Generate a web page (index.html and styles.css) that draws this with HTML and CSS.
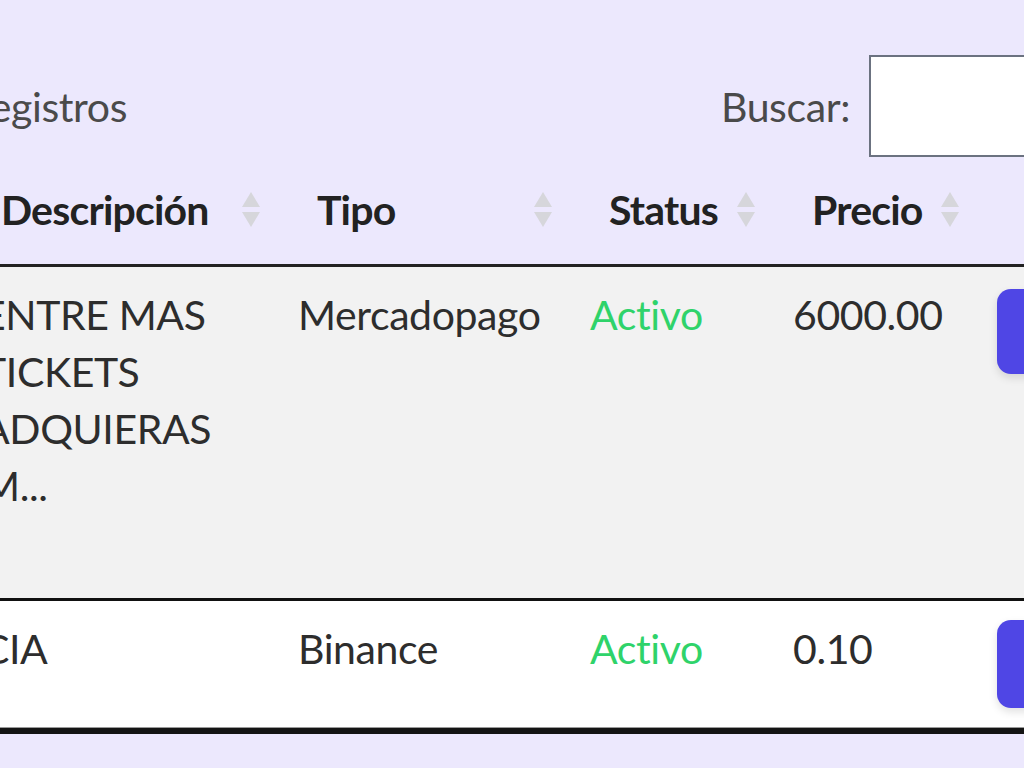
FILE: index.html
```html
<!DOCTYPE html>
<html lang="es">
<head>
<meta charset="utf-8">
<title>Planes</title>
<link rel="stylesheet" href="styles.css">
</head>
<body>
<div class="dt-wrapper">
  <div class="dt-top">
    <div class="dt-length"><label>Mostrar <select class="dt-select"><option>10</option></select> registros</label></div>
    <div class="dt-filter-label"><label for="buscar">Buscar:</label></div>
    <div class="dt-filter"><input id="buscar" class="dt-input" type="search"></div>
  </div>
  <table class="dt">
    <colgroup>
      <col class="c-desc"><col class="c-tipo"><col class="c-status"><col class="c-precio"><col class="c-acc">
    </colgroup>
    <thead>
      <tr>
        <th class="sorting">Descripción<svg class="sort-icon" viewBox="0 0 18 36"><path d="M9 0 L18 15 L0 15 Z"/><path d="M0 20 L18 20 L9 35 Z"/></svg></th>
        <th class="sorting">Tipo<svg class="sort-icon" viewBox="0 0 18 36"><path d="M9 0 L18 15 L0 15 Z"/><path d="M0 20 L18 20 L9 35 Z"/></svg></th>
        <th class="sorting">Status<svg class="sort-icon" viewBox="0 0 18 36"><path d="M9 0 L18 15 L0 15 Z"/><path d="M0 20 L18 20 L9 35 Z"/></svg></th>
        <th class="sorting">Precio<svg class="sort-icon" viewBox="0 0 18 36"><path d="M9 0 L18 15 L0 15 Z"/><path d="M0 20 L18 20 L9 35 Z"/></svg></th>
        <th class="th-acc">Acciones</th>
      </tr>
    </thead>
    <tbody>
      <tr class="row-odd">
        <td>ENTRE MAS TICKETS ADQUIERAS M...</td>
        <td>Mercadopago</td>
        <td class="status-on">Activo</td>
        <td>6000.00</td>
        <td><button class="btn-edit btn-a" type="button">Editar</button></td>
      </tr>
      <tr class="row-even">
        <td>CIA</td>
        <td>Binance</td>
        <td class="status-on">Activo</td>
        <td>0.10</td>
        <td><button class="btn-edit btn-b" type="button">Editar</button></td>
      </tr>
    </tbody>
  </table>
</div>
</body>
</html>
```
FILE: styles.css
```css
html, body {
  margin: 0;
  padding: 0;
  overflow: hidden;
  background: #ece8fd;
  width: 1024px;
  height: 768px;
}

body {
  font-family: Lato, "Noto Sans", sans-serif;
  font-size: 41px;
  letter-spacing: -0.4px;
  color: #2b2b2b;
}

.dt-wrapper {
  margin-left: -45px;
  width: 1400px;
}

.dt-top {
  display: grid;
  grid-template-columns: 172px 742px 320px;
  align-items: center;
  padding-top: 55px;
  height: 102px;
}

.dt-length {
  display: flex;
  justify-content: flex-end;
  white-space: nowrap;
  color: #4a4a4a;
}

.dt-select {
  font: inherit;
  margin: 0 8px;
}

.dt-filter-label {
  display: flex;
  justify-content: flex-end;
  padding-right: 19px;
  color: #4a4a4a;
}

.dt-input {
  box-sizing: border-box;
  width: 320px;
  height: 102px;
  border: 2px solid #6b7280;
  background: #fff;
  border-radius: 0;
  font: inherit;
}

.dt {
  border-collapse: separate;
  border-spacing: 0;
  table-layout: fixed;
  width: 1315px;
  border-bottom: 6px solid #141414;
}

.c-desc { width: 316px; }
.c-tipo { width: 292px; }
.c-status { width: 203px; }
.c-precio { width: 204px; }
.c-acc { width: 300px; }

.dt th {
  position: relative;
  text-align: left;
  font-weight: 700;
  letter-spacing: -0.8px;
  color: #222;
  line-height: 57px;
  padding: 24px 27px 26px 46px;
  border-bottom: 3px solid #222;
  white-space: nowrap;
}

.dt th.th-acc {
  text-align: right;
  padding-right: 20px;
}

.sort-icon {
  position: absolute;
  right: 11px;
  top: 50%;
  width: 18px;
  height: 36px;
  margin-top: -19px;
  fill: #d6d6db;
}

.dt td {
  vertical-align: top;
  line-height: 57px;
  padding: 19px 27px;
  color: #2d2d2d;
}

.row-odd td {
  background: #f2f2f2;
  height: 293px;
  border-bottom: 3px solid #111;
}

.row-even td {
  background: #fff;
  border-bottom: 1px solid #9a9a9a;
}

.dt td.status-on {
  color: #2fd36a;
}

.btn-edit {
  display: block;
  width: 120px;
  border: 0;
  border-radius: 14px;
  background: #4f46e5;
  color: #fff;
  font: inherit;
  box-shadow: 0 4px 8px rgba(0, 0, 0, 0.12);
  text-indent: 40px;
  overflow: hidden;
  white-space: nowrap;
}

.btn-a {
  height: 85px;
  margin-top: 3px;
}

.btn-b {
  height: 88px;
}
```
